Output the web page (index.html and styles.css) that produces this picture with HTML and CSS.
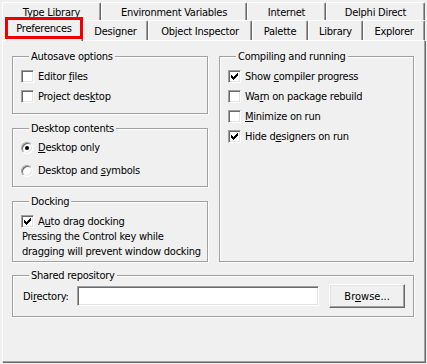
FILE: index.html
```html
<!DOCTYPE html>
<html lang="en">
<head>
  <meta charset="UTF-8">
  <title>Environment Options</title>
  <link rel="stylesheet" href="styles.css">
</head>
<body>
  <div class="dialog">
    <div class="tab-row back">
      <div class="tab tab-type">Type Library</div>
      <div class="tab tab-env">Environment Variables</div>
      <div class="tab tab-internet">Internet</div>
      <div class="tab tab-delphi">Delphi Direct</div>
    </div>
    <div class="tab-row front">
      <div class="tab tab-prefs selected">Preferences<span class="highlight"></span></div>
      <div class="tab tab-designer">Designer</div>
      <div class="tab tab-inspector">Object Inspector</div>
      <div class="tab tab-palette">Palette</div>
      <div class="tab tab-library">Library</div>
      <div class="tab tab-explorer">Explorer</div>
    </div>

    <div class="page">
      <div class="columns">
        <div class="col">
          <div class="group autosave">
            <div class="group-title">Autosave options</div>
            <div class="check-row"><span class="check"></span><span>Editor <u>f</u>iles</span></div>
            <div class="check-row"><span class="check"></span><span>Project des<u>k</u>top</span></div>
          </div>

          <div class="group desktop">
            <div class="group-title">Desktop contents</div>
            <div class="radio-row"><span class="radio on"></span><span><u>D</u>esktop only</span></div>
            <div class="radio-row"><span class="radio"></span><span>Desktop and <u>s</u>ymbols</span></div>
          </div>

          <div class="group docking">
            <div class="group-title">Docking</div>
            <div class="check-row"><span class="check on"></span><span>A<u>u</u>to drag docking</span></div>
            <p class="note">Pressing the Control key while<br>dragging will prevent window docking</p>
          </div>
        </div>

        <div class="col">
          <div class="group compiling">
            <div class="group-title">Compiling and running</div>
            <div class="check-row"><span class="check on"></span><span>Show <u>c</u>ompiler progress</span></div>
            <div class="check-row"><span class="check"></span><span>Wa<u>r</u>n on package rebuild</span></div>
            <div class="check-row"><span class="check"></span><span><u>M</u>inimize on run</span></div>
            <div class="check-row"><span class="check on"></span><span>Hide d<u>e</u>signers on run</span></div>
          </div>
        </div>
      </div>

      <div class="group shared">
        <div class="group-title">Shared repository</div>
        <div class="dir-row">
          <label class="dir-label">Di<u>r</u>ectory:</label>
          <input class="dir-input" type="text">
          <button class="btn" type="button">Br<u>o</u>wse...</button>
        </div>
      </div>
    </div>
  </div>

  <script>
    // checked boxes get the classic tick
    document.querySelectorAll(".check.on").forEach((box) => {
      box.innerHTML = '<svg width="9" height="9" viewBox="0 0 9 9" shape-rendering="crispEdges"><path d="M1 3H2V4H3V5H4V4H5V3H6V2H7V1H8V4H7V5H6V6H5V7H4V8H3V7H2V6H1Z" fill="#000"/></svg>';
    });
  </script>
</body>
</html>
```

FILE: styles.css
```css
body {
  margin: 0;
  background: #f0f0f0;
  font-family: 'DejaVu Sans Condensed', 'DejaVu Sans', sans-serif;
  font-size: 11px;
  letter-spacing: -0.25px;
  color: #000;
}

.dialog {
  width: 427px;
  height: 364px;
  padding-top: 2px;
  box-sizing: border-box;
}

u {
  text-decoration: underline;
  text-underline-offset: 1px;
}

/* tabs */
.tab-row {
  display: flex;
  align-items: flex-end;
}

.tab-row.back {
  height: 18px;
  padding-left: 2px;
}

.tab-row.front {
  height: 20px;
}

.tab {
  box-sizing: border-box;
  height: 100%;
  border-top: 1px solid #fff;
  border-left: 1px solid #fff;
  border-right: 1px solid #696969;
  border-radius: 2px 2px 0 0;
  box-shadow: inset -1px 0 #a0a0a0;
  display: flex;
  align-items: center;
  justify-content: center;
  white-space: nowrap;
  background: #f0f0f0;
}

.back .tab { padding-top: 1px; }

.tab-type { width: 99px; }
.tab-env { width: 146px; }
.tab-internet { width: 79px; }
.tab-delphi { width: 99px; }

.tab-prefs { width: 78px; margin-left: 5px; }
.tab-designer { width: 65px; }
.tab-inspector { width: 104px; }
.tab-palette { width: 56px; }
.tab-library { width: 55px; }
.tab-explorer { width: 62px; }

.front .tab { padding-top: 1px; }

.tab.selected {
  height: 24px;
  margin-bottom: -1px;
  padding-top: 0;
  padding-bottom: 3px;
  position: relative;
  z-index: 2;
}

.highlight {
  position: absolute;
  left: -1px;
  top: -1px;
  width: 78px;
  height: 22px;
  box-sizing: border-box;
  border: 3px solid #ee0000;
}

/* page */
.page {
  position: relative;
  margin-left: 2px;
  width: 423px;
  height: 322px;
  box-sizing: border-box;
  border-top: 1px solid #fff;
  border-left: 1px solid #fff;
  border-right: 1px solid #a0a0a0;
  border-bottom: 1px solid #a0a0a0;
  box-shadow: 1px 1px 0 #696969;
  padding: 15px 10px 0 9px;
}

.columns {
  display: grid;
  grid-template-columns: 196px 195px;
  column-gap: 11px;
}

.group {
  border: 1px solid #a0a0a0;
  box-shadow: inset 1px 1px #fff, 1px 1px #fff;
  padding: 0 8px 7px 8px;
}

.group-title {
  display: table;
  margin: -7px 0 3px 8px;
  padding: 0 2px;
  line-height: 13px;
  background: #f0f0f0;
}

.col .group + .group {
  margin-top: 14px;
}

.compiling {
  height: 100%;
  box-sizing: border-box;
}

.desktop {
  padding-bottom: 4px;
}

.desktop .group-title {
  margin-bottom: 1px;
}

.docking {
  padding-bottom: 2px;
}

.check-row,
.radio-row {
  display: flex;
  align-items: center;
  height: 20px;
  white-space: nowrap;
}

.radio-row {
  height: 23px;
}

.check {
  width: 13px;
  height: 13px;
  box-sizing: border-box;
  border: 1px solid;
  border-color: #a0a0a0 #fff #fff #a0a0a0;
  box-shadow: inset 1px 1px #696969, inset -1px -1px #e3e3e3;
  background: #fff;
  margin-right: 4px;
  padding: 1px;
  flex-shrink: 0;
}

.check svg {
  display: block;
}

.radio {
  width: 12px;
  height: 12px;
  box-sizing: border-box;
  border-radius: 50%;
  border: 1px solid;
  border-color: #a0a0a0 #fff #fff #a0a0a0;
  box-shadow: inset 1px 1px #696969, inset -1px -1px #e3e3e3;
  background: #fff;
  margin-right: 5px;
  display: flex;
  align-items: center;
  justify-content: center;
  flex-shrink: 0;
}

.radio.on::after {
  content: "";
  width: 4px;
  height: 4px;
  border-radius: 50%;
  background: #000;
}

.note {
  margin: -2px 0 0 1px;
  line-height: 15px;
  white-space: nowrap;
}

/* shared repository */
.shared {
  margin-top: 13px;
  padding: 0 8px 8px 10px;
}

.shared .group-title {
  margin-bottom: 2px;
  margin-left: 6px;
}

.dir-row {
  display: flex;
  align-items: center;
  height: 24px;
}

.dir-label {
  width: 54px;
}

.dir-input {
  width: 243px;
  height: 20px;
  box-sizing: border-box;
  margin: 0;
  border: 1px solid;
  border-color: #a0a0a0 #fff #fff #a0a0a0;
  box-shadow: inset 1px 1px #696969, inset -1px -1px #e3e3e3;
  background: #fff;
  padding: 0 3px;
  font: inherit;
}

.btn {
  width: 76px;
  height: 24px;
  margin: 0 0 0 10px;
  box-sizing: border-box;
  border: 1px solid;
  border-color: #fff #696969 #696969 #fff;
  box-shadow: inset -1px -1px #a0a0a0, inset 1px 1px #e3e3e3;
  background: #f0f0f0;
  font: inherit;
  color: #000;
  padding: 0;
}
```
